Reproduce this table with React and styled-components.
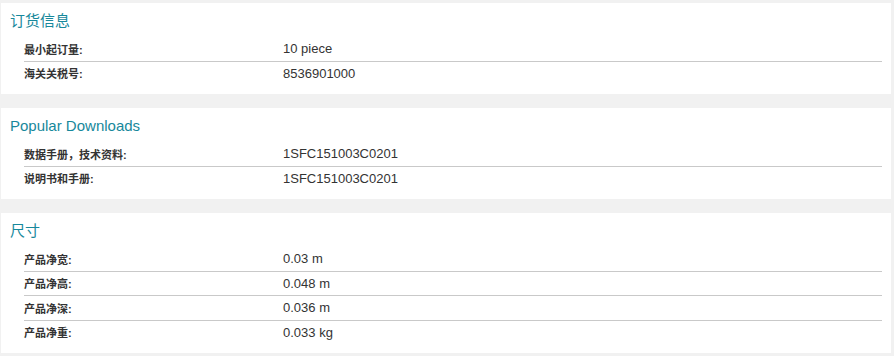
import React from 'react';
import styled, { createGlobalStyle } from 'styled-components';

const GlobalStyle = createGlobalStyle`
  html, body {
    margin: 0;
    padding: 0;
    background: #f1f1f1;
  }
  body {
    font-family: "Liberation Sans", Arial, "Noto Sans CJK SC", sans-serif;
    color: #333;
  }
`;

const Page = styled.div`
  padding: 3px 3px 3px 1px;
  display: flex;
  flex-direction: column;
  gap: 14px;
`;

const Panel = styled.section`
  background: #fff;
  padding: 8px 9px 9px 9px;
`;

const Title = styled.h2`
  margin: 0 0 6px 0;
  font-size: 15px;
  line-height: 20px;
  font-weight: normal;
  color: #17889b;
  font-family: "Liberation Sans", Arial, "Noto Sans CJK SC", sans-serif;
`;

const Rows = styled.div`
  margin-left: 14px;
  display: flex;
  flex-direction: column;
`;

const Row = styled.div`
  display: grid;
  grid-template-columns: 259px 1fr;
  align-items: center;
  height: 23.5px;
  & + & {
    border-top: 1px solid #c9c9c9;
  }
`;

const Label = styled.span`
  font-size: 11px;
  font-weight: bold;
  color: #333;
  font-family: "Liberation Sans", Arial, "Noto Sans CJK SC", sans-serif;
`;

const Value = styled.span`
  font-size: 13px;
  color: #333;
`;

const sections = [
  {
    title: '订货信息',
    rows: [
      ['最小起订量:', '10 piece'],
      ['海关关税号:', '8536901000'],
    ],
  },
  {
    title: 'Popular Downloads',
    rows: [
      ['数据手册，技术资料:', '1SFC151003C0201'],
      ['说明书和手册:', '1SFC151003C0201'],
    ],
  },
  {
    title: '尺寸',
    rows: [
      ['产品净宽:', '0.03 m'],
      ['产品净高:', '0.048 m'],
      ['产品净深:', '0.036 m'],
      ['产品净重:', '0.033 kg'],
    ],
  },
];

export default function App() {
  return (
    <>
      <GlobalStyle />
      <Page>
        {sections.map((s) => (
          <Panel key={s.title}>
            <Title>{s.title}</Title>
            <Rows>
              {s.rows.map(([k, v]) => (
                <Row key={k}>
                  <Label>{k}</Label>
                  <Value>{v}</Value>
                </Row>
              ))}
            </Rows>
          </Panel>
        ))}
      </Page>
    </>
  );
}
